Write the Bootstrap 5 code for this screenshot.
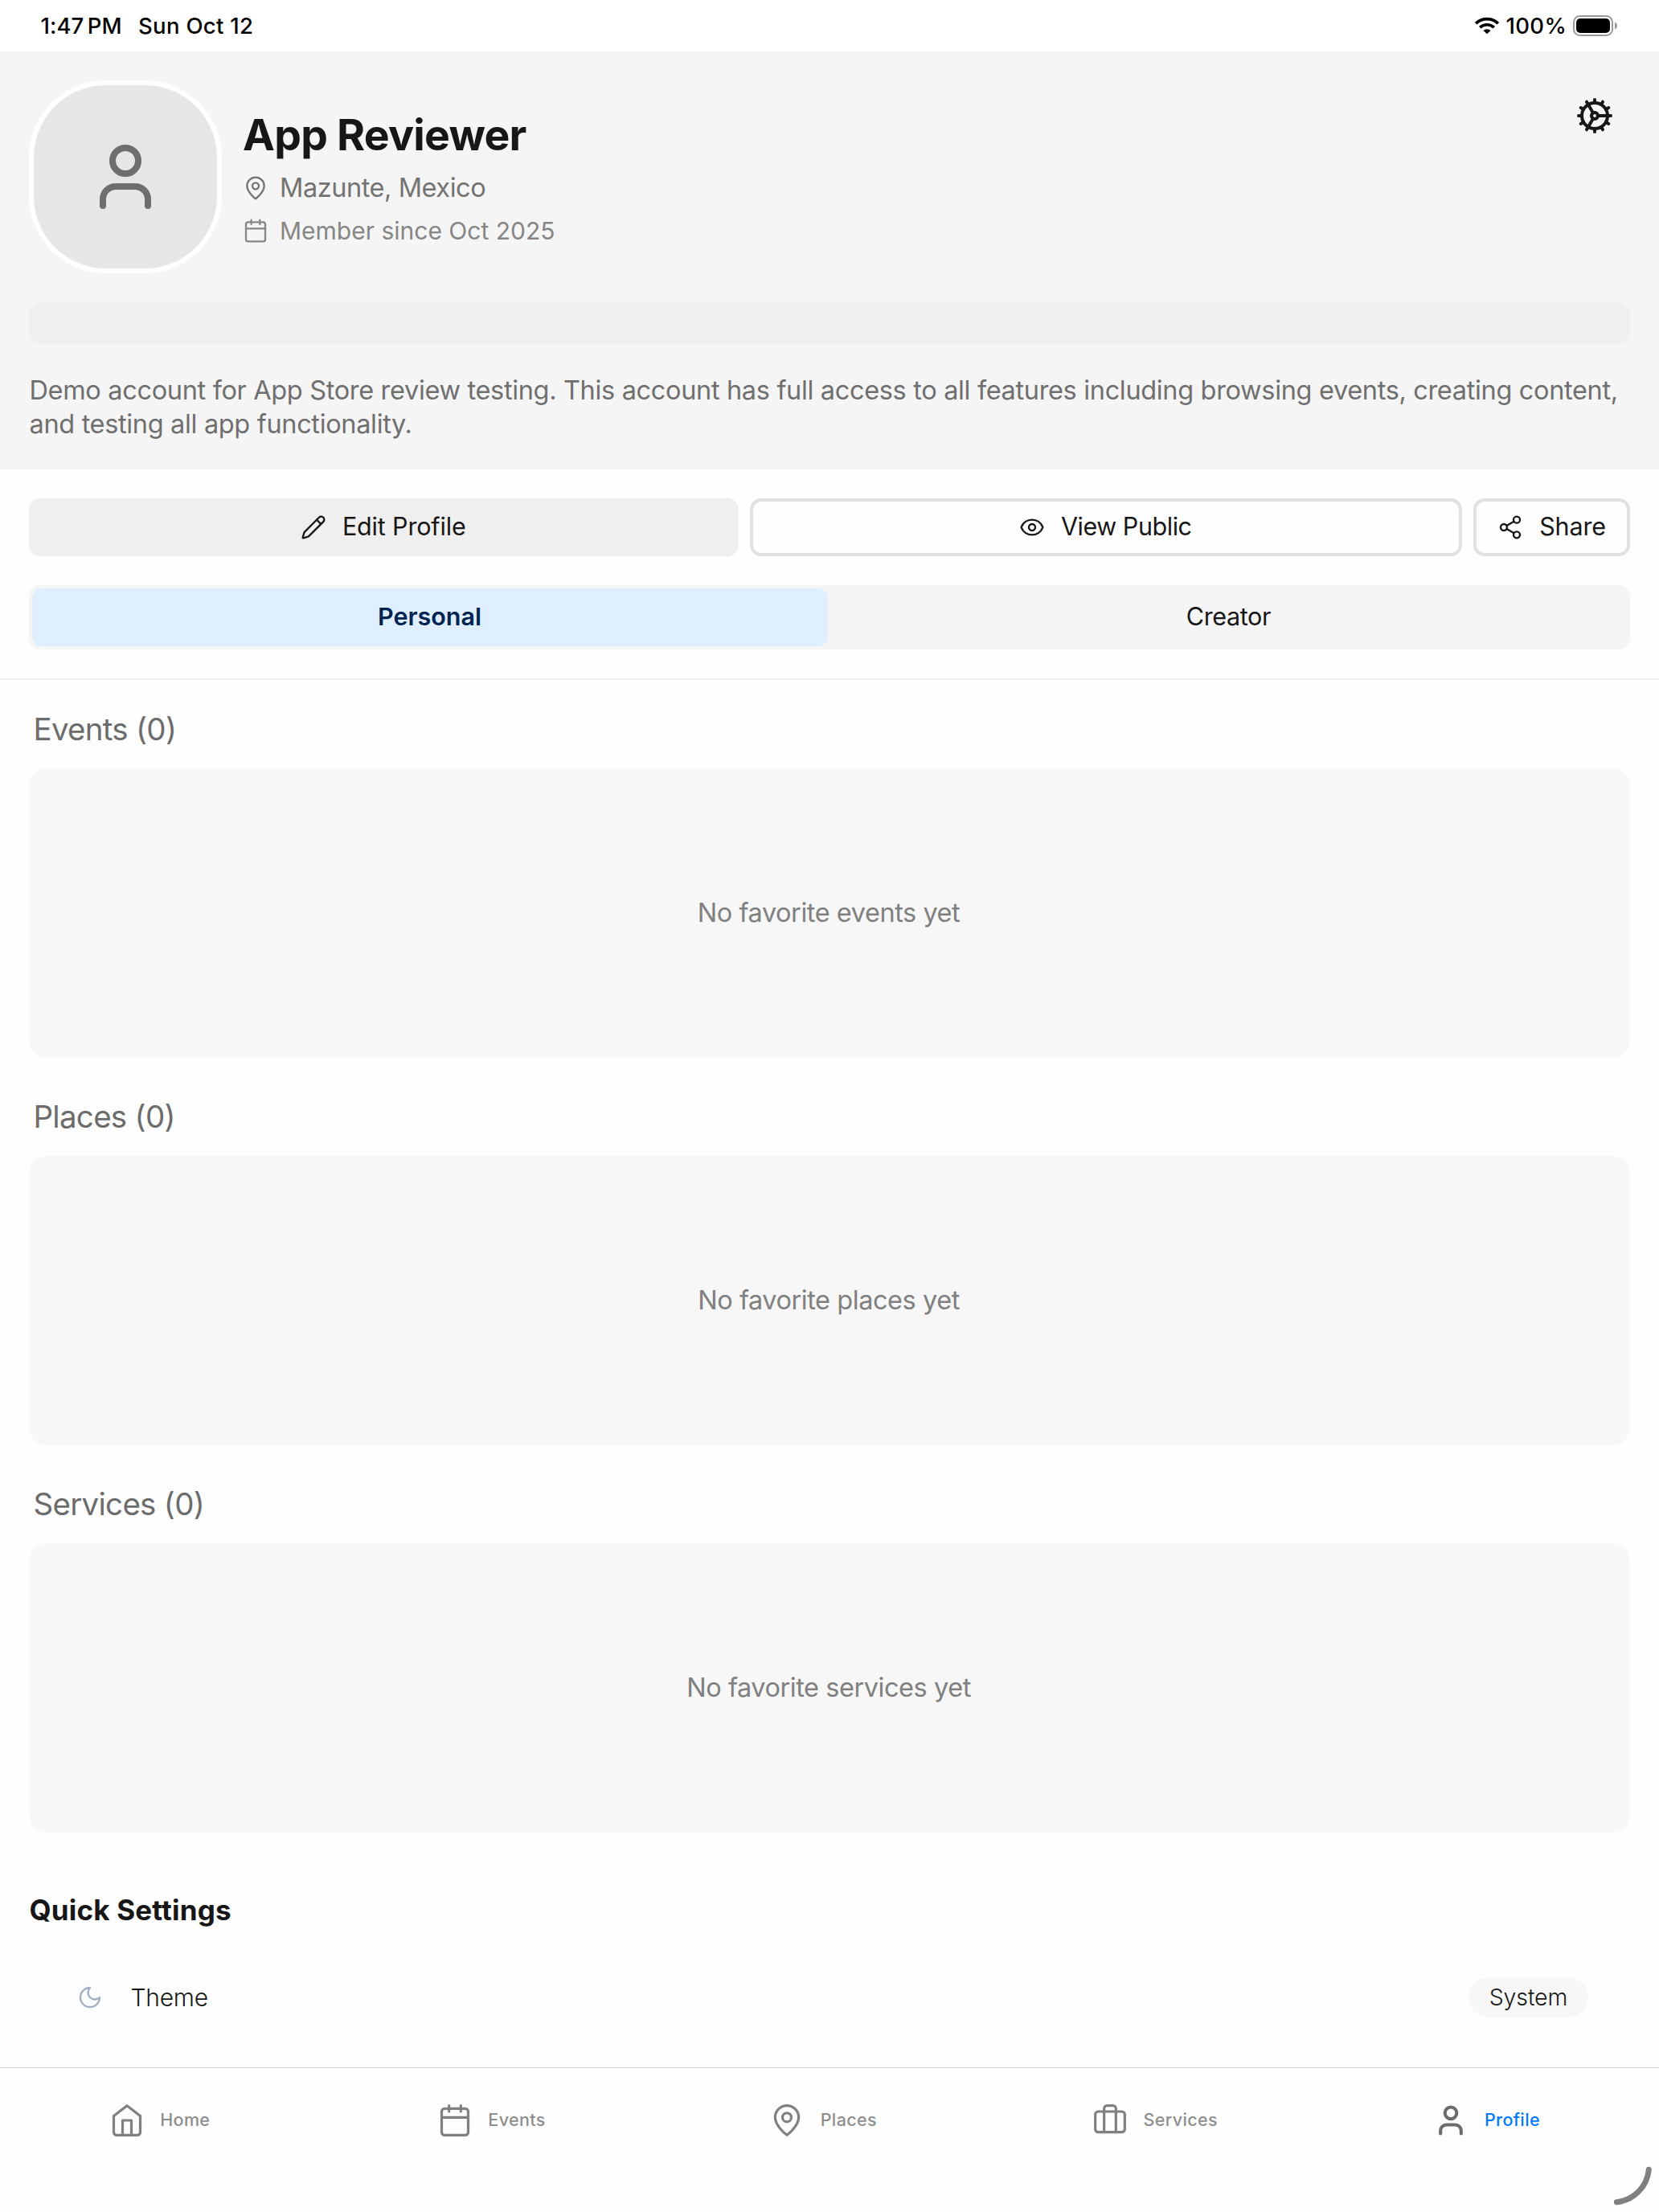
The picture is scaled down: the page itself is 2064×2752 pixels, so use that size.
<!DOCTYPE html>
<html lang="en">
<head>
<meta charset="utf-8">
<meta name="viewport" content="width=device-width, initial-scale=1">
<title>Profile</title>
<link href="https://cdn.jsdelivr.net/npm/bootstrap@5.3.0/dist/css/bootstrap.min.css" rel="stylesheet">
<style>
  body { height: 2752px; background: #fefefe; color: #171717; font-family: Inter, "Liberation Sans", sans-serif; white-space: nowrap; }
  svg { display: block; flex: none; }
  .ico { fill: none; stroke: currentColor; stroke-width: 1.75; stroke-linecap: round; stroke-linejoin: round; }

  .statusbar { height: 64px; background: #fff; color: #000; padding: 0 51px 0 50.5px; font-size: 27.5px; font-weight: 500; line-height: 64px; letter-spacing: .3px; }
  .clock { width: 121.5px; word-spacing: -3px; letter-spacing: .1px; }
  .pct { margin: 0 8px 0 8.5px; }

  .profile-head { height: 520px; background: #f5f5f5; padding: 36px 36px 0; }
  .avatar { width: 240px; height: 240px; border: 6px solid #fff; border-radius: 96px; background: #e6e6e6; color: #6e6e6e; margin-right: 26px; }
  .who { padding-top: 34px; }
  .who h1 { font-size: 53.5px; font-weight: 700; line-height: 67px; letter-spacing: -.75px; margin: 0 0 11px; }
  .meta { height: 44px; gap: 14px; }
  .meta svg { margin-top: -1px; }
  .place { font-size: 32.5px; letter-spacing: -.45px; color: #737373; margin-bottom: 9px; }
  .since { font-size: 30px; color: #868686; }
  .gear { margin: 20px 20px 0 auto; }
  .skeleton { height: 52px; margin-top: 36px; border-radius: 16px; background: #efefef; }
  .bio { margin: 37px 0 0 .5px; font-size: 32.5px; line-height: 42px; letter-spacing: -.34px; color: #6f6f6f; }

  .action-row { padding: 36px 36px 0; gap: 14px; }
  .act { height: 72px; padding: 0; border: 4px solid #e1e1e1; border-radius: 14px; gap: 20px; font-size: 30.5px; line-height: 1; color: #171717; background: #fefefe; letter-spacing: -.15px; }
  .act span { padding-bottom: 2px; }
  .act-edit { flex: 0 0 883px; background: #efefef; border-color: #efefef; }
  .act-edit, .act-view { padding-right: 1.5px; }
  .act-view { letter-spacing: -.45px; }
  .act-share { flex: 0 0 195px; }
  .segment { height: 80px; margin: 36px 36px 0; padding: 4px; gap: 4px; border-radius: 14px; background: #f5f5f5; font-size: 30.5px; }
  .segment .nav-link { height: 72px; padding: 0 1px 0 0; line-height: 70px; color: #171717; letter-spacing: -.38px; border-radius: 12px; }
  .segment .nav-link.active { background: #dfefff; color: #002451; font-weight: 600; letter-spacing: 0; }
  .rule { height: 2px; margin-top: 36px; background: #efefef; }

  .favs { padding: 0 36px; }
  .favs h2 { margin: 48px 0 24px 5.5px; font-size: 38.5px; font-weight: 400; line-height: 50px; letter-spacing: -.72px; color: #6c6c6c; }
  .favs:first-of-type h2 { margin-top: 36px; }
  .empty { height: 360px; padding-right: 2px; border-radius: 22px; background: #f7f7f7; color: #808080; font-size: 32.5px; letter-spacing: -.45px; }
  .quick-title { margin: 74px 36px 0 36.5px; font-size: 35px; font-weight: 700; line-height: 44px; letter-spacing: .18px; }
  .setting { margin: 62px 88px 0; height: 50px; }
  .tile { width: 48px; height: 48px; border-radius: 14px; background: #fbfdff; color: #a0aec0; margin-right: 26.5px; }
  .setting-name { font-size: 30px; font-weight: 300; letter-spacing: -.27px; }
  .pill { width: 149px; height: 50px; background: #f7f7f7; font-size: 28.5px; font-weight: 300; letter-spacing: -.1px; }

  .tabs { height: 180px; border-top: 1px solid #d8d8d8; padding-top: 43px; font-size: 21.5px; font-weight: 500; letter-spacing: .37px; }
  .tabs a { height: 44px; gap: 19.5px; padding-right: 15.8px; color: #8e8e8e; text-decoration: none; }
  .tabs a span { padding-bottom: 2px; }
  .tabs a svg { color: #808080; }
  .tabs a.active { color: #007aff; }
  .tabs a.active svg { color: #6c6c6c; }
  .corner { right: 8px; bottom: 4px; }
</style>
</head>
<body class="d-flex flex-column overflow-hidden position-relative m-0">

<header class="statusbar d-flex align-items-center">
  <span class="clock">1:47 PM</span>
  <span>Sun Oct 12</span>
  <svg class="ms-auto" width="30" height="22" viewBox="0 0 30 22" fill="none" stroke="#000" stroke-width="3.7" stroke-linecap="butt">
    <path d="M1.2 8.2a20 20 0 0 1 27.6 0"/>
    <path d="M6.2 13.2a13 13 0 0 1 17.6 0"/>
    <path d="M10.4 17a7 7 0 0 1 9.2 0L15 21.3z" fill="#000" stroke="none"/>
  </svg>
  <span class="pct">100%</span>
  <svg width="56" height="26" viewBox="0 0 56 26">
    <rect x="1" y="1" width="48" height="24" rx="7.5" fill="none" stroke="#9c9c9c" stroke-width="2"/>
    <rect x="4" y="4" width="42" height="18" rx="5" fill="#000"/>
    <path d="M52 8.5c4 1.5 4 7.500 0 9z" fill="#9c9c9c"/>
  </svg>
</header>

<section class="profile-head">
  <div class="d-flex align-items-start">
    <div class="avatar d-flex align-items-center justify-content-center">
      <svg class="ico" style="stroke-width:2" width="96" height="96" viewBox="0 0 24 24"><path d="M19 21v-2a4 4 0 0 0-4-4H9a4 4 0 0 0-4 4v2"/><circle cx="12" cy="7" r="4"/></svg>
    </div>
    <div class="who">
      <h1>App Reviewer</h1>
      <div class="meta place d-flex align-items-center">
        <svg class="ico" width="32" height="32" viewBox="0 0 24 24"><path d="M20 10c0 6-8 12-8 12s-8-6-8-12a8 8 0 0 1 16 0Z"/><circle cx="12" cy="10" r="3"/></svg>
        <span>Mazunte, Mexico</span>
      </div>
      <div class="meta since d-flex align-items-center">
        <svg class="ico" width="32" height="32" viewBox="0 0 24 24"><path d="M8 2v4M16 2v4M3 10h18"/><rect x="3" y="4" width="18" height="18" rx="2"/></svg>
        <span>Member since Oct 2025</span>
      </div>
    </div>
    <svg class="ico gear" style="stroke-width:2" width="48" height="48" viewBox="0 0 24 24"><path d="M12 20a8 8 0 1 0 0-16 8 8 0 0 0 0 16Z"/><path d="M12 14a2 2 0 1 0 0-4 2 2 0 0 0 0 4Z"/><path d="M12 2v2M12 22v-2M17 20.660l-1-1.730M11 10.270 7 3.340M20.660 17l-1.730-1M3.340 7l1.730 1M14 12h8M2 12h2M20.660 7l-1.730 1M3.340 17l1.730-1M17 3.340l-1 1.730M11 13.730l-4 6.930"/></svg>
  </div>
  <div class="skeleton"></div>
  <p class="bio">Demo account for App Store review testing. This account has full access to all features including browsing events, creating content,<br>and testing all app functionality.</p>
</section>

<main class="flex-grow-1 overflow-hidden">
  <div class="action-row d-flex">
    <button class="btn act act-edit d-flex align-items-center justify-content-center">
      <svg class="ico" width="32" height="32" viewBox="0 0 24 24"><path d="M21.174 6.812a1 1 0 0 0-3.986-3.987L3.842 16.174a2 2 0 0 0-.5.83l-1.321 4.352a.5.5 0 0 0 .623.622l4.353-1.32a2 2 0 0 0 .83-.497z"/><path d="m15 5 4 4"/></svg>
      <span>Edit Profile</span>
    </button>
    <button class="btn act act-view flex-grow-1 d-flex align-items-center justify-content-center">
      <svg class="ico" width="32" height="32" viewBox="0 0 24 24"><path d="M2.062 12.348a1 1 0 0 1 0-.696 10.75 10.75 0 0 1 19.876 0 1 1 0 0 1 0 .696 10.75 10.75 0 0 1-19.876 0"/><circle cx="12" cy="12" r="3"/></svg>
      <span>View Public</span>
    </button>
    <button class="btn act act-share d-flex align-items-center justify-content-center">
      <svg class="ico" width="32" height="32" viewBox="0 0 24 24"><circle cx="18" cy="5" r="3"/><circle cx="6" cy="12" r="3"/><circle cx="18" cy="19" r="3"/><path d="m8.590 13.510 6.830 3.980M15.410 6.510l-6.820 3.980"/></svg>
      <span>Share</span>
    </button>
  </div>

  <nav class="segment nav nav-pills nav-fill flex-nowrap">
    <a class="nav-link active w-50">Personal</a>
    <a class="nav-link w-50">Creator</a>
  </nav>
  <div class="rule"></div>

  <section class="favs">
    <h2>Events (0)</h2>
    <div class="empty d-flex align-items-center justify-content-center">No favorite events yet</div>
  </section>
  <section class="favs">
    <h2>Places (0)</h2>
    <div class="empty d-flex align-items-center justify-content-center">No favorite places yet</div>
  </section>
  <section class="favs">
    <h2>Services (0)</h2>
    <div class="empty d-flex align-items-center justify-content-center">No favorite services yet</div>
  </section>

  <h3 class="quick-title">Quick Settings</h3>
  <div class="setting d-flex align-items-center">
    <div class="tile d-flex align-items-center justify-content-center">
      <svg class="ico" width="32" height="32" viewBox="0 0 24 24"><path d="M12 3a6 6 0 0 0 9 9 9 9 0 1 1-9-9Z"/></svg>
    </div>
    <span class="setting-name">Theme</span>
    <span class="pill rounded-pill ms-auto d-flex align-items-center justify-content-center">System</span>
  </div>
</main>

<nav class="tabs row row-cols-5 g-0 align-content-start">
  <a class="d-flex align-items-center justify-content-center">
    <svg class="ico" width="44" height="44" viewBox="0 0 24 24"><path d="m3 9 9-7 9 7v11a2 2 0 0 1-2 2H5a2 2 0 0 1-2-2z"/><path d="M9 22V12h6v10"/></svg>
    <span>Home</span>
  </a>
  <a class="d-flex align-items-center justify-content-center">
    <svg class="ico" width="44" height="44" viewBox="0 0 24 24"><path d="M8 2v4M16 2v4M3 10h18"/><rect x="3" y="4" width="18" height="18" rx="2"/></svg>
    <span>Events</span>
  </a>
  <a class="d-flex align-items-center justify-content-center">
    <svg class="ico" width="44" height="44" viewBox="0 0 24 24"><path d="M20 10c0 6-8 12-8 12s-8-6-8-12a8 8 0 0 1 16 0Z"/><circle cx="12" cy="10" r="3"/></svg>
    <span>Places</span>
  </a>
  <a class="d-flex align-items-center justify-content-center">
    <svg class="ico" width="44" height="44" viewBox="0 0 24 24"><path d="M16 20V4a2 2 0 0 0-2-2h-4a2 2 0 0 0-2 2v16"/><rect x="2" y="6" width="20" height="14" rx="2"/></svg>
    <span>Services</span>
  </a>
  <a class="active d-flex align-items-center justify-content-center">
    <svg class="ico" style="stroke-width:2.25" width="44" height="44" viewBox="0 0 24 24"><path d="M19 21v-2a4 4 0 0 0-4-4H9a4 4 0 0 0-4 4v2"/><circle cx="12" cy="7" r="4"/></svg>
    <span>Profile</span>
  </a>
</nav>

<svg class="corner position-absolute" width="50" height="54" viewBox="0 0 50 54" fill="none" stroke="#808080" stroke-width="7" stroke-linecap="round"><path d="M45.300 5.300A45 45 0 0 1 5.300 45.700"/></svg>

<script src="https://cdn.jsdelivr.net/npm/bootstrap@5.3.0/dist/js/bootstrap.bundle.min.js"></script>
</body>
</html>
